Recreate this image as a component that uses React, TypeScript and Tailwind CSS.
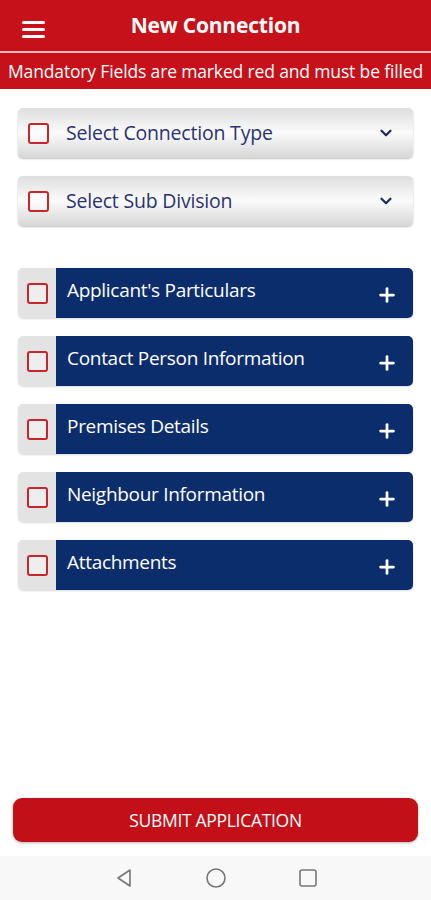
import { ChevronDown, Plus } from 'lucide-react';

const sections = [
  "Applicant's Particulars",
  'Contact Person Information',
  'Premises Details',
  'Neighbour Information',
  'Attachments',
];

function Check() {
  return <span className="block h-[21px] w-[21px] rounded-[3px] border-2 border-[#c8252c] bg-white/40" />;
}

export default function App() {
  return (
    <div className="flex h-[900px] w-[431px] flex-col bg-white font-['Open_Sans',sans-serif]">
      <header className="relative flex h-[51px] items-center justify-center bg-[#c6111a]">
        <button className="absolute left-[22px] top-[21px] flex flex-col gap-[4px]">
          <span className="block h-[3px] w-[23px] rounded bg-white" />
          <span className="block h-[3px] w-[23px] rounded bg-white" />
          <span className="block h-[3px] w-[23px] rounded bg-white" />
        </button>
        <h1 className="text-[21px] font-bold tracking-[-0.2px] text-white">New Connection</h1>
      </header>
      <div className="h-[2px] bg-[#f0b9bb]" />
      <div className="flex h-[36px] items-center justify-center bg-[#c6111a]">
        <p className="whitespace-nowrap text-[17.5px] tracking-[-0.15px] text-white">Mandatory Fields are marked red and must be filled</p>
      </div>

      <div className="flex flex-col px-[18px] pt-[19px]">
        {['Select Connection Type', 'Select Sub Division'].map((label) => (
          <div
            key={label}
            className="mb-[18px] flex h-[50px] items-center rounded-[5px] bg-gradient-to-b from-[#dedede] via-[#fbfbfb] to-[#d6d6d6] pl-[10px] pr-[18px] shadow-[0_1px_2px_rgba(0,0,0,0.25)]"
          >
            <Check />
            <span className="ml-[17px] flex-1 text-[19.5px] tracking-[-0.2px] text-[#2c3170]">{label}</span>
            <ChevronDown size={18} strokeWidth={3} className="text-[#1d2a5c]" />
          </div>
        ))}

        <div className="mt-[24px] flex flex-col gap-[18px]">
          {sections.map((title) => (
            <div key={title} className="flex h-[50px] overflow-hidden rounded-[5px] shadow-[0_1px_2px_rgba(0,0,0,0.15)]">
              <div className="flex w-[38px] items-center justify-center bg-[#e3e3e3]">
                <Check />
              </div>
              <div className="flex flex-1 items-center bg-[#0c2d6b] pl-[11px] pr-[15px]">
                <span className="-mt-[6px] flex-1 text-[19px] font-medium tracking-[-0.3px] text-white">{title}</span>
                <Plus size={22} strokeWidth={3} className="mt-[4px] text-white" />
              </div>
            </div>
          ))}
        </div>
      </div>

      <div className="flex-1" />

      <div className="px-[13px] pb-[14px]">
        <button className="flex h-[44px] w-full items-center justify-center rounded-[9px] bg-[#c20f18] text-[17.5px] tracking-[-0.3px] text-white shadow-[0_1px_3px_rgba(0,0,0,0.3)]">
          SUBMIT APPLICATION
        </button>
      </div>

      <nav className="flex h-[44px] items-center justify-center gap-[70px] bg-[#f8f8f8]">
        <svg width="22" height="22" viewBox="0 0 22 22" fill="none" stroke="#777" strokeWidth="1.6" strokeLinejoin="round">
          <path d="M17 3 L5 11 L17 19 Z" />
        </svg>
        <svg width="22" height="22" viewBox="0 0 22 22" fill="none" stroke="#777" strokeWidth="1.6">
          <circle cx="11" cy="11" r="9" />
        </svg>
        <svg width="22" height="22" viewBox="0 0 22 22" fill="none" stroke="#777" strokeWidth="1.6">
          <rect x="3" y="3" width="16" height="16" rx="2" />
        </svg>
      </nav>
    </div>
  );
}
